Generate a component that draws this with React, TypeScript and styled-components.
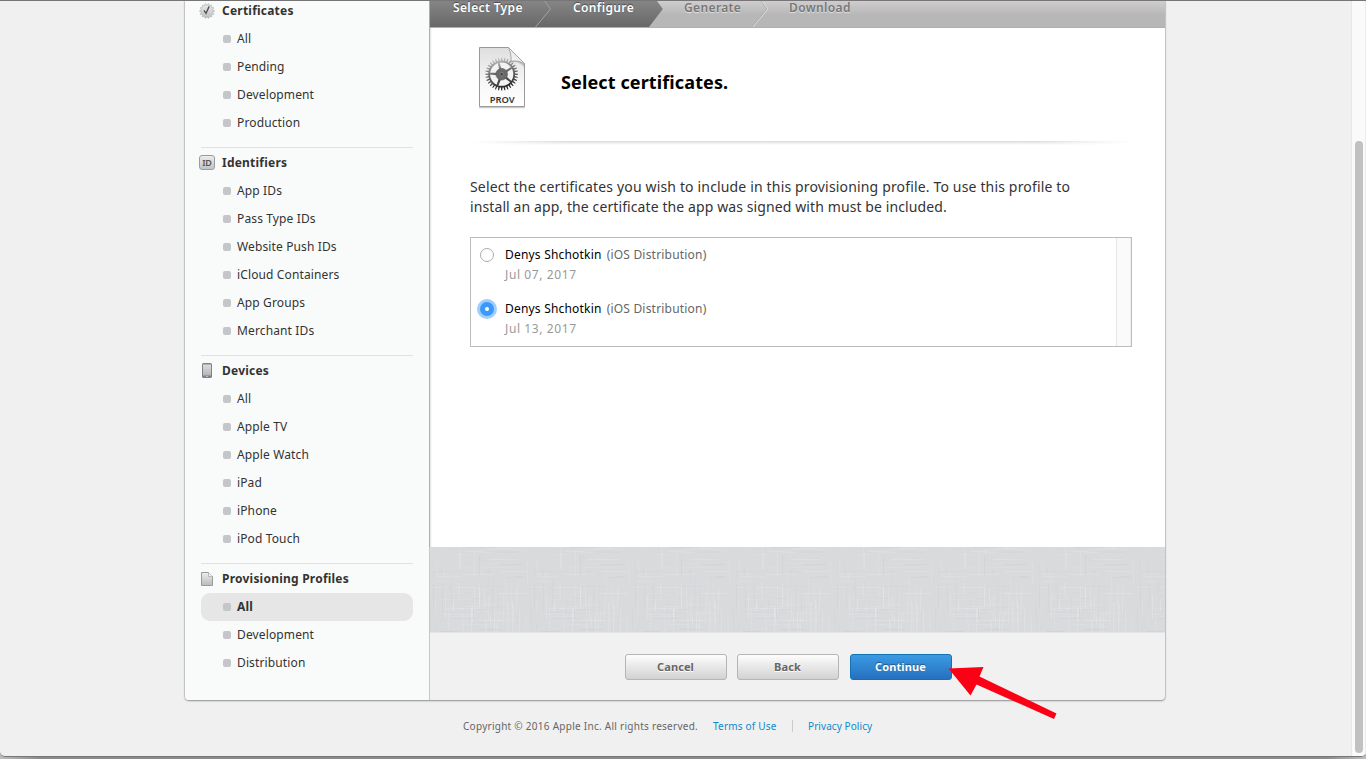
import React from "react";
import styled, { createGlobalStyle, css } from "styled-components";

const GlobalStyle = createGlobalStyle`
  * { box-sizing: border-box; }
  html, body { margin: 0; padding: 0; }
  body {
    font-family: "Noto Sans", "Open Sans", sans-serif;
    font-size: 12px;
    color: #333;
    overflow: hidden;
  }
`;

const Desktop = styled.div`
  width: 1366px;
  height: 759px;
  overflow: hidden;
  background: linear-gradient(90deg, #bdbdbd 0, #8a8a8a 40px, #8a8a8a 1326px, #bdbdbd 100%);
`;

const Window = styled.div`
  position: relative;
  display: flex;
  height: 757px;
  overflow: hidden;
  background: #f0f0f0;
  border-top: 1px solid #777577;
  border-bottom: 1px solid #777;
  border-radius: 0 0 5px 5px;
`;

const Page = styled.div`
  flex: 1;
  min-width: 0;
  padding-left: 185px;
`;

const ScrollTrack = styled.div`
  width: 15px;
  padding: 140px 2px 3px 3px;
  background: #fafafa;
  border-left: 1px solid #e7e7e7;
  border-right: 1px solid #ececec;
`;

const ScrollThumb = styled.div`
  width: 8px;
  height: 100%;
  border-radius: 4px;
  background: #c1c1c1;
`;

const Card = styled.div`
  display: flex;
  width: 980px;
  height: 699px;
  overflow: hidden;
  border-radius: 0 0 4px 4px;
  background: #f1f1f1;
  box-shadow: 0 0 1px 1px rgba(0, 0, 0, 0.13), 0 1px 2px rgba(0, 0, 0, 0.3);
`;

const Sidebar = styled.nav`
  width: 245px;
  height: 699px;
  padding: 0 16px;
  background: #f9fbfa;
  border-right: 1px solid #c6c8c8;
`;

const Section = styled.section<{ $first?: boolean }>`
  ${(p) =>
    p.$first
      ? css`
          margin-top: -4px;
        `
      : css`
          margin-top: 10px;
          padding-top: 1px;
          border-top: 1px solid #e0e2e1;
        `}
`;

const SectionTitle = styled.h2`
  display: flex;
  align-items: center;
  height: 28px;
  margin: 0 0 0 -3px;
  font-size: 12px;
  font-weight: 700;
  letter-spacing: 0.22px;
  color: #333;
`;

const IconSlot = styled.span<{ $raised?: boolean }>`
  display: flex;
  justify-content: center;
  width: 18px;
  margin-right: 6px;
  margin-bottom: ${(p) => (p.$raised ? 1 : 0)}px;
`;

const Label = styled.span`
  padding-bottom: 2px;
  white-space: nowrap;
`;

const Item = styled.div<{ $active?: boolean }>`
  display: flex;
  align-items: center;
  gap: 6px;
  height: 28px;
  padding-left: 22px;
  border-radius: 9px;
  letter-spacing: 0.13px;
  background: ${(p) => (p.$active ? "#e6e6e6" : "transparent")};
  font-weight: ${(p) => (p.$active ? 700 : 400)};
  &::before {
    content: "";
    width: 8px;
    height: 8px;
    border-radius: 2px;
    background: #c5c6ca;
  }
`;

const Content = styled.main`
  display: flex;
  flex-direction: column;
  width: 735px;
`;

const Steps = styled.div`
  position: relative;
  display: flex;
  height: 27px;
  padding-left: 23px;
  background: linear-gradient(#cfcdce, #b7b7b7 14px);
  border-bottom: 1px solid #b0b0b0;
  box-shadow: -1px 0 #acaeae;
`;

const StepShapes = styled.svg`
  position: absolute;
  left: 0;
  top: 0;
`;

const StepLabel = styled.div<{ $done?: boolean; $width: number }>`
  position: relative;
  width: ${(p) => p.$width}px;
  line-height: 14px;
  font-size: 12px;
  font-weight: 600;
  letter-spacing: 0.37px;
  white-space: nowrap;
  color: ${(p) => (p.$done ? "#fff" : "#777")};
  text-shadow: ${(p) => (p.$done ? "0 -1px 1px rgba(0,0,0,.45)" : "0 1px 1px rgba(255,255,255,.6)")};
`;

const Body = styled.div`
  height: 519px;
  padding: 19px 33px 0 40px;
  background: #fff;
  box-shadow: -1px 0 #acaeae, inset 2px 0 2px -1px rgba(0, 0, 0, 0.12);
`;

const Heading = styled.header`
  display: flex;
  align-items: flex-start;
  height: 94px;
  padding-left: 7px;
`;

const Title = styled.h1`
  margin: 22px 0 0 35px;
  font-size: 18px;
  line-height: 26px;
  font-weight: 700;
  letter-spacing: 0.12px;
  color: #000;
`;

const Divider = styled.div`
  width: 662px;
  height: 4px;
  background: linear-gradient(90deg, #fff, transparent 14%, transparent 86%, #fff), linear-gradient(#dcdcdc, #fff);
`;

const Intro = styled.p`
  margin: 32px 0 20px;
  font-size: 14px;
  line-height: 20px;
  letter-spacing: 0.16px;
  color: #333;
  white-space: nowrap;
`;

const IntroEnd = styled.span`
  letter-spacing: 0.1px;
`;

const CertificateList = styled.div`
  display: flex;
  width: 662px;
  height: 110px;
  border: 1px solid #bcbcbc;
`;

const Rows = styled.div`
  flex: 1;
`;

const ListScroll = styled.div`
  width: 15px;
  background: #fafafa;
  border-left: 1px solid #e6e6e6;
  border-right: 1px solid #eee;
`;

const CertRow = styled.label`
  display: flex;
  height: 54px;
  padding: 7px 0 0 9px;
  line-height: 20px;
`;

const Radio = styled.span<{ $checked?: boolean }>`
  display: flex;
  align-items: center;
  justify-content: center;
  width: 14px;
  height: 14px;
  margin: 3px 11px 0 0;
  border-radius: 50%;
  ${(p) =>
    p.$checked
      ? css`
          background: #3b99fc;
          box-shadow: 0 0 0 3px #a1cdfa;
          &::after {
            content: "";
            width: 4px;
            height: 4px;
            border-radius: 50%;
            background: #fff;
          }
        `
      : css`
          background: #fff;
          border: 1px solid #adadad;
        `}
`;

const CertName = styled.div`
  color: #000;
  letter-spacing: 0.2px;
  white-space: nowrap;
`;

const Kind = styled.span`
  margin-left: 5px;
  color: #666;
`;

const CertDate = styled.div`
  color: #999;
  letter-spacing: 0.6px;
`;

const Linen = styled.div`
  height: 86px;
  overflow: hidden;
  border-bottom: 1px solid #e4e4e4;
  background: #d9dadc;
`;

const Actions = styled.div`
  display: flex;
  padding: 21px 0 0 195px;
`;

const Button = styled.button<{ $primary?: boolean }>`
  width: 102px;
  height: 26px;
  margin: 0 ${(p) => (p.$primary ? 0 : 10)}px 0 0;
  padding: 0 1px 0 0;
  font: 700 11px/22px "Noto Sans", sans-serif;
  letter-spacing: 0.1px;
  border-radius: 3px;
  ${(p) =>
    p.$primary
      ? css`
          margin-left: 1px;
          color: #fff;
          border: 1px solid #1272b4;
          background: linear-gradient(#3b9ae3, #2570bf);
          text-shadow: 0 -1px 1px rgba(0, 0, 0, 0.4);
        `
      : css`
          color: #666;
          border: 1px solid #b5b5b5;
          background: linear-gradient(#fdfdfd, #d2d2d2);
          text-shadow: 0 1px 0 #fff;
        `}
`;

const Footer = styled.footer`
  display: flex;
  align-items: center;
  height: 16px;
  margin: 18px 0 0 278px;
  font-size: 10px;
  letter-spacing: 0.27px;
  color: #666;
  white-space: nowrap;
`;

const Copyright = styled.span`
  width: 250px;
`;

const FooterLink = styled.a<{ $width?: number }>`
  width: ${(p) => (p.$width ? `${p.$width}px` : "auto")};
  letter-spacing: ${(p) => (p.$width ? 0.2 : 0.08)}px;
  color: #0e89cc;
`;

const Separator = styled.span`
  width: 1px;
  height: 12px;
  margin: 0 15px 0 0;
  background: #ccc;
`;

const Arrow = styled.svg`
  position: absolute;
  left: 945px;
  top: 660px;
`;

const polar = (r: number, deg: number, cx = 0, cy = 0) => {
  const a = (deg * Math.PI) / 180;
  return `${(cx + r * Math.cos(a)).toFixed(2)},${(cy + r * Math.sin(a)).toFixed(2)}`;
};

const gearPoints = (teeth: number, outer: number, inner: number, c: number) =>
  Array.from({ length: teeth }, (_, i) => {
    const s = 360 / teeth;
    const a = i * s;
    return [polar(inner, a - s * 0.3, c, c), polar(outer, a - s * 0.15, c, c), polar(outer, a + s * 0.15, c, c), polar(inner, a + s * 0.3, c, c)].join(" ");
  }).join(" ");

const SealIcon = () => (
  <svg width="16" height="16" viewBox="0 0 16 16">
    <defs>
      <linearGradient id="seal" x1="0" y1="0" x2="0" y2="1">
        <stop offset="0" stopColor="#ececec" />
        <stop offset="1" stopColor="#bfc0c2" />
      </linearGradient>
    </defs>
    <polygon points={gearPoints(14, 7.3, 5.9, 8)} fill="url(#seal)" stroke="#a9aaac" strokeWidth=".6" />
    <path d="M4.9 7.4 7 10.4 10.2 3.4" fill="none" stroke="#555" strokeWidth="1.4" />
  </svg>
);

const IdIcon = styled.span`
  width: 16px;
  height: 15px;
  border: 1px solid #9b9c9e;
  border-radius: 3px;
  background: linear-gradient(#ececed, #c2c3c6);
  font-size: 9px;
  line-height: 13px;
  font-weight: 600;
  letter-spacing: -0.1px;
  text-align: center;
  color: #555;
`;

const DeviceIcon = () => (
  <svg width="10" height="15" viewBox="0 0 10 15">
    <defs>
      <linearGradient id="screen" x1="0" y1="0" x2="0" y2="1">
        <stop offset="0" stopColor="#dcdddf" />
        <stop offset="1" stopColor="#b4b5b9" />
      </linearGradient>
    </defs>
    <rect width="10" height="15" rx="1.6" fill="#808184" />
    <rect x="1" y="1.5" width="8" height="11" fill="url(#screen)" />
    <rect x="4" y="13" width="2" height="1" fill="#bbb" />
  </svg>
);

const DocIcon = () => (
  <svg width="12" height="14" viewBox="0 0 12 14">
    <defs>
      <linearGradient id="doc" x1="0" y1="0" x2="0" y2="1">
        <stop offset="0" stopColor="#ededee" />
        <stop offset="1" stopColor="#b9babd" />
      </linearGradient>
    </defs>
    <path d="M.5.5H7.5L11.5 4.5V13.5H.5Z" fill="url(#doc)" stroke="#999a9d" />
    <path d="M7.5.5V4.5H11.5" fill="#f5f5f5" stroke="#a9aaad" strokeWidth=".8" />
  </svg>
);

const ProvIcon = () => (
  <svg width="49" height="64" viewBox="0 0 49 64">
    <defs>
      <linearGradient id="paper" x1="0" y1="0" x2="0" y2="1">
        <stop offset="0" stopColor="#dedede" />
        <stop offset=".6" stopColor="#f7f7f7" />
        <stop offset="1" stopColor="#fff" />
      </linearGradient>
      <linearGradient id="metal" gradientUnits="userSpaceOnUse" x1="12" y1="0" x2="20" y2="33">
        <stop offset="0" stopColor="#c4c4c4" />
        <stop offset=".45" stopColor="#6c6c6c" />
        <stop offset="1" stopColor="#1c1c1c" />
      </linearGradient>
      <linearGradient id="curl" x1="0" y1="1" x2="1" y2="0">
        <stop offset="0" stopColor="#fff" />
        <stop offset=".5" stopColor="#e9e9e9" />
        <stop offset="1" stopColor="#bbb" />
      </linearGradient>
    </defs>
    <path d="M2 60.5H48" stroke="#ccc" strokeWidth="1.5" />
    <path d="M2.5 .5H31.5L47.5 16.5V59.5H2.5Z" fill="url(#paper)" stroke="#999" />
    <path d="M32 2Q35 10 33 16Q41 13 47 20V17Z" fill="#999" opacity=".55" />
    <path d="M31.5 .5Q35 9 34 14Q41 13 47.5 16.5Z" fill="url(#curl)" stroke="#999" strokeWidth=".7" />
    <g transform="translate(8 10.5)">
      <polygon points={gearPoints(32, 16.4, 13.4, 16.7)} fill="url(#metal)" />
      <circle cx="16.7" cy="16.7" r="11.6" fill="#f3f3f3" />
      {[-105, -33, 39, 111, 183].map((a) => (
        <polygon key={a} points={[polar(5, a - 14, 16.7, 16.7), polar(12, a - 4, 16.7, 16.7), polar(12, a + 4, 16.7, 16.7), polar(5, a + 14, 16.7, 16.7)].join(" ")} fill="url(#metal)" />
      ))}
      <circle cx="16.7" cy="16.7" r="5.8" fill="#6a6a6a" stroke="#555" strokeWidth=".6" />
      <circle cx="16.7" cy="16.7" r="1.8" fill="#444" stroke="#999" strokeWidth=".6" />
    </g>
    <text x="25.2" y="56" textAnchor="middle" fontFamily="Noto Sans, sans-serif" fontSize="9.2" fontWeight="600" fill="#333" textLength="25" lengthAdjust="spacingAndGlyphs">
      PROV
    </text>
  </svg>
);

// Short crossing threads of a woven cloth, repeated as a tile.
const threads = (() => {
  let seed = 7;
  const next = () => (seed = (seed * 16807) % 2147483647) / 2147483647;
  return Array.from({ length: 170 }, (_, i) => {
    const across = i % 2 === 0;
    const length = 8 + Math.floor(next() * 24);
    const along = Math.floor(next() * (101 - length));
    const offset = Math.floor(next() * 101);
    return {
      across,
      length,
      x: across ? along : offset,
      y: across ? offset : along,
      light: next() > 0.35,
      opacity: 0.03 + next() * 0.12,
    };
  });
})();

const LinenTexture = () => (
  <svg width="735" height="85">
    <defs>
      <pattern id="weave" width="101" height="101" patternUnits="userSpaceOnUse">
        {threads.map((t, i) => (
          <rect
            key={i}
            x={t.x}
            y={t.y}
            width={t.across ? t.length : 1}
            height={t.across ? 1 : t.length}
            fill={t.light ? "#fff" : "#b4b6ba"}
            opacity={t.opacity}
          />
        ))}
      </pattern>
    </defs>
    <rect width="735" height="85" fill="url(#weave)" />
  </svg>
);

type Group = { title: string; icon: React.ReactNode; raised?: boolean; items: string[]; active?: string };

const groups: Group[] = [
  { title: "Certificates", icon: <SealIcon />, items: ["All", "Pending", "Development", "Production"] },
  {
    title: "Identifiers",
    icon: <IdIcon>ID</IdIcon>,
    raised: true,
    items: ["App IDs", "Pass Type IDs", "Website Push IDs", "iCloud Containers", "App Groups", "Merchant IDs"],
  },
  {
    title: "Devices",
    icon: <DeviceIcon />,
    raised: true,
    items: ["All", "Apple TV", "Apple Watch", "iPad", "iPhone", "iPod Touch"],
  },
  {
    title: "Provisioning Profiles",
    icon: <DocIcon />,
    items: ["All", "Development", "Distribution"],
    active: "All",
  },
];

const certificates = [
  { name: "Denys Shchotkin", kind: "(iOS Distribution)", date: "Jul 07, 2017", checked: false },
  { name: "Denys Shchotkin", kind: "(iOS Distribution)", date: "Jul 13, 2017", checked: true },
];

const steps = [
  { label: "Select Type", done: true, width: 120 },
  { label: "Configure", done: true, width: 111 },
  { label: "Generate", done: false, width: 105 },
  { label: "Download", done: false, width: 90 },
];

const StepsBar = () => (
  <Steps>
    <StepShapes width="735" height="26" viewBox="0 0 735 26">
      <defs>
        <linearGradient id="dark" x1="0" y1="0" x2="0" y2="1">
          <stop offset="0" stopColor="#858585" />
          <stop offset="1" stopColor="#686868" />
        </linearGradient>
      </defs>
      <path d="M0 0H227L232.8 8L219 26H0Z" fill="url(#dark)" />
      <path d="M114.5 0L120.5 8L105.5 26" fill="none" stroke="#a2a2a2" />
      <path d="M331 0L337 8L322 26" fill="none" stroke="#a5a5a5" strokeWidth=".7" />
      <path d="M332 0L338 8L323 26" fill="none" stroke="#dedede" strokeWidth=".9" />
    </StepShapes>
    {steps.map((s) => (
      <StepLabel key={s.label} $done={s.done} $width={s.width}>
        {s.label}
      </StepLabel>
    ))}
  </Steps>
);

export default function App() {
  return (
    <Desktop>
      <GlobalStyle />
      <Window>
        <Page>
          <Card>
            <Sidebar>
              {groups.map((g, i) => (
                <Section key={g.title} $first={i === 0}>
                  <SectionTitle>
                    <IconSlot $raised={g.raised}>{g.icon}</IconSlot>
                    <Label>{g.title}</Label>
                  </SectionTitle>
                  {g.items.map((item) => (
                    <Item key={item} $active={item === g.active}>
                      <Label>{item}</Label>
                    </Item>
                  ))}
                </Section>
              ))}
            </Sidebar>
            <Content>
              <StepsBar />
              <Body>
                <Heading>
                  <ProvIcon />
                  <Title>Select certificates.</Title>
                </Heading>
                <Divider />
                <Intro>
                  Select the certificates you wish to include in this provisioning profile. To use this profile to
                  <br />
                  <IntroEnd>install an app, the certificate the app was signed with must be included.</IntroEnd>
                </Intro>
                <CertificateList>
                  <Rows>
                    {certificates.map((c) => (
                      <CertRow key={c.date}>
                        <Radio $checked={c.checked} />
                        <div>
                          <CertName>
                            {c.name}
                            <Kind>{c.kind}</Kind>
                          </CertName>
                          <CertDate>{c.date}</CertDate>
                        </div>
                      </CertRow>
                    ))}
                  </Rows>
                  <ListScroll />
                </CertificateList>
              </Body>
              <Linen>
                <LinenTexture />
              </Linen>
              <Actions>
                <Button>Cancel</Button>
                <Button>Back</Button>
                <Button $primary>Continue</Button>
              </Actions>
            </Content>
          </Card>
          <Footer>
            <Copyright>Copyright © 2016 Apple Inc. All rights reserved.</Copyright>
            <FooterLink $width={79}>Terms of Use</FooterLink>
            <Separator />
            <FooterLink>Privacy Policy</FooterLink>
          </Footer>
        </Page>
        <ScrollTrack>
          <ScrollThumb />
        </ScrollTrack>
        <Arrow width="115" height="62" viewBox="0 0 115 62">
          <path d="M3.5 7.5L38.5 6L34.5 15.5L111.5 52.5L109 58L31.5 23.5L25.5 34.5Z" fill="#fc0015" />
        </Arrow>
      </Window>
    </Desktop>
  );
}
